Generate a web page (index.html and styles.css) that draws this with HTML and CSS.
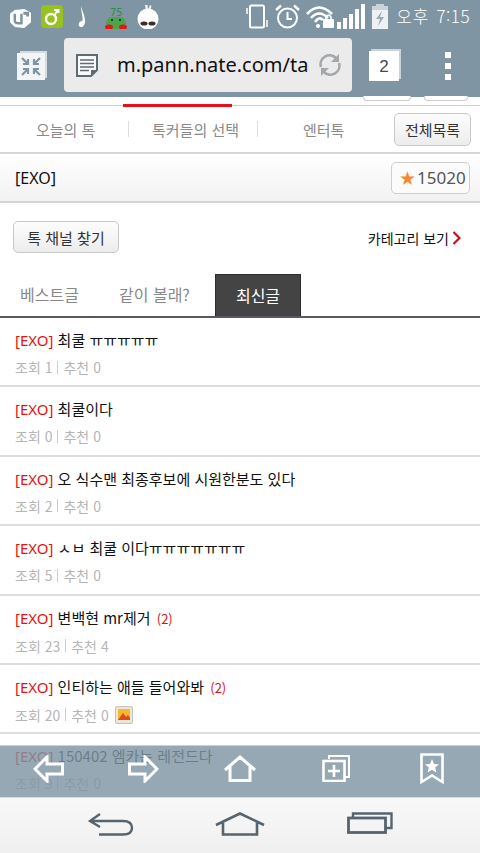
FILE: index.html
```html
<!DOCTYPE html>
<html lang="ko">
<head>
<meta charset="utf-8">
<title>EXO 톡</title>
<link rel="stylesheet" href="styles.css">
</head>
<body>
<div class="page">
  <header class="chrome">
    <div class="status">
      <div class="notifs">
        <svg class="n-u" viewBox="0 0 24 22"><path d="M6 2 L16 1 L23 5 L23 15 L16 21 L6 20 L1 15 L1 6 Z" fill="#fff"/><path d="M6 6 V13 Q6 16 10 16 H13 V6" fill="none" stroke="#7f95a3" stroke-width="2.6"/><path d="M15 4 H21 V9 H18 V7 H15 Z" fill="#7f95a3"/></svg>
        <svg class="n-g" viewBox="0 0 22 23"><rect width="22" height="23" rx="3.5" fill="#96c11f"/><circle cx="10" cy="14" r="5" fill="none" stroke="#fff" stroke-width="2.4"/><path d="M13.5 10 L17 5 M13 5 H17.5 V8" fill="none" stroke="#fff" stroke-width="2"/></svg>
        <svg class="n-m" viewBox="0 0 8 21"><path d="M3 0 C4 5 7 9 7 15 C7 19 5 21 3 21 C1 21 0 19 1 17 C2 15 4 15 4.500 15 C5 10 3 6 3 0 Z" fill="#fff"/></svg>
        <svg class="n-f" viewBox="0 0 22 22"><text x="5" y="9" class="frog-num">75</text><path d="M1 22 Q0 10 7 10 H15 Q22 10 21 22 Z" fill="#4ea34b"/><circle cx="7" cy="13" r="1" fill="#123"/><circle cx="15" cy="13" r="1" fill="#123"/><ellipse cx="4" cy="20" rx="4" ry="2.500" fill="#e6141a"/><ellipse cx="18" cy="20" rx="4" ry="2.500" fill="#e6141a"/></svg>
        <svg class="n-b" viewBox="0 0 22 24"><path d="M9 6 L8 0 L10.500 0 L11 5 L13 0 L14.500 1 L13 6 Z" fill="#f4f0ec"/><circle cx="11" cy="14" r="10.500" fill="#fff"/><ellipse cx="7" cy="18.500" rx="3.500" ry="2" fill="#3a2d28"/><ellipse cx="15" cy="18.500" rx="3.500" ry="2" fill="#3a2d28"/></svg>
      </div>
      <div class="sys">
        <svg class="s-phone" viewBox="0 0 24 25"><rect x="4" y="1.500" width="14" height="22" rx="1.500" fill="none" stroke="#fff" stroke-width="2"/><path d="M1 4 V10 M21 16 V23" stroke="#fff" stroke-width="1.500"/></svg>
        <svg class="s-alarm" viewBox="0 0 25 25"><circle cx="12.500" cy="14" r="9.500" fill="none" stroke="#fff" stroke-width="2"/><path d="M12.500 8 V15 H17" fill="none" stroke="#fff" stroke-width="2"/><path d="M1 6 L6 1.500 M24 6 L19 1.500" stroke="#fff" stroke-width="2.400"/></svg>
        <svg class="s-wifi" viewBox="0 0 29 24"><path d="M1 10 Q13 -3 26 10 M5 14 Q13 5 22 14 M9 18 Q13 12 17 16" fill="none" stroke="#fff" stroke-width="2.600"/><rect x="17" y="15" width="11" height="9" rx="1" fill="#fff"/><path d="M20 15 V13 Q22.500 9 25 13 V15" fill="none" stroke="#fff" stroke-width="1.600"/><circle cx="12" cy="22" r="2" fill="#fff"/></svg>
        <svg class="s-signal" viewBox="0 0 28 25"><path d="M0 18 H4 V25 H0 Z M6 14 H10 V25 H6 Z M12 10 H16 V25 H12 Z M18 5 H22 V25 H18 Z M24 0 H28 V25 H24 Z" fill="#fff"/></svg>
        <svg class="s-batt" viewBox="0 0 16 25"><path d="M4 0 H12 V2 H16 V25 H0 V2 H4 Z" fill="#c9d3d9"/><path d="M0 6 H16 V25 H0 Z" fill="#eef1f3"/><path d="M10 7 L4 15 H8 L6 22 L12 13 H8 Z" fill="#9aabb5"/></svg>
        <span class="clock"><span class="ampm">오후</span><span>7:15</span></span>
      </div>
    </div>
    <div class="urlrow">
      <svg class="i-shrink" viewBox="0 0 30 30"><path d="M3 1 H30 V28 H28 V3 H3 Z" fill="#d5dce1"/><rect x="0" y="3" width="28" height="27" fill="#f2f4f5"/><path d="M5 8 L11 14 M11 9 V14 H6 M23 8 L17 14 M17 9 V14 H22 M5 25 L11 19 M11 24 V19 H6 M23 25 L17 19 M17 24 V19 H22" fill="none" stroke="#7f95a3" stroke-width="2.200"/></svg>
      <div class="addr">
        <svg class="i-doc" viewBox="0 0 22 23"><path d="M1 1 H21 V16 L15 22 H1 Z" fill="#fafafa" stroke="#5d6b75" stroke-width="2"/><path d="M4 6 H18 M4 9.500 H18 M4 13 H18 M4 16.500 H13" stroke="#5d6b75" stroke-width="1.500"/><path d="M15 22 V16 H21 Z" fill="#5d6b75"/></svg>
        <span class="url">m.pann.nate.com/talk</span>
        <svg class="i-reload" viewBox="0 0 22 22"><path d="M2 13 A9 9 0 0 1 17 4 M20 9 A9 9 0 0 1 5 18" fill="none" stroke="#a3a8ac" stroke-width="2.600"/><path d="M20 0 V8 H12 Z M2 22 V14 H10 Z" fill="#a3a8ac"/></svg>
      </div>
      <div class="tabcount"><span>2</span></div>
      <div class="dots"><i></i><i></i><i></i></div>
    </div>
  </header>

  <div class="strip">
    <span class="ghost g1"></span><span class="ghost g2"></span>
    <span class="redbar"></span>
  </div>

  <nav class="mainnav">
    <a class="nav-a">오늘의 톡</a><i class="sep"></i>
    <a class="nav-b">톡커들의 선택</a><i class="sep"></i>
    <a class="nav-c">엔터톡</a>
    <button class="btn btn-all">전체목록</button>
  </nav>

  <section class="titlebar">
    <h1>[EXO]</h1>
    <div class="fav"><span class="star">★</span><span>15020</span></div>
  </section>

  <section class="tools">
    <button class="btn btn-find">톡 채널 찾기</button>
    <a class="cat">카테고리 보기<svg class="chev" viewBox="0 0 9 14"><path d="M1.500 1 L7.500 7 L1.500 13" fill="none" stroke="#c8101a" stroke-width="2.200"/></svg></a>
  </section>

  <div class="tabs">
    <a class="tab t1">베스트글</a>
    <a class="tab t2">같이 볼래?</a>
    <a class="tab t3 on">최신글</a>
  </div>

  <ul class="list">
    <li><p class="ttl"><b>[EXO]</b> 최쿨 ㅠㅠㅠㅠㅠ</p><p class="meta">조회 1<i></i>추천 0</p></li>
    <li><p class="ttl"><b>[EXO]</b> 최쿨이다</p><p class="meta">조회 0<i></i>추천 0</p></li>
    <li><p class="ttl"><b>[EXO]</b> 오 식수맨 최종후보에 시원한분도 있다</p><p class="meta">조회 2<i></i>추천 0</p></li>
    <li><p class="ttl"><b>[EXO]</b> ㅅㅂ 최쿨 이다ㅠㅠㅠㅠㅠㅠㅠ</p><p class="meta">조회 5<i></i>추천 0</p></li>
    <li><p class="ttl"><b>[EXO]</b> 변백현 mr제거 <em>(2)</em></p><p class="meta">조회 23<i></i>추천 4</p></li>
    <li><p class="ttl"><b>[EXO]</b> 인티하는 애들 들어와봐 <em>(2)</em></p><p class="meta">조회 20<i></i>추천 0<svg class="pic" viewBox="0 0 18 18"><rect x=".5" y=".5" width="17" height="17" rx="1.500" fill="#ece6d6" stroke="#c8c4b8"/><rect x="3" y="3" width="12" height="11" fill="#f7b733"/><path d="M3 14 L8 7 L11 11 L13 9 L15 12 V14 Z" fill="#e0491a"/></svg></p></li>
    <li><p class="ttl"><b>[EXO]</b> 150402 엠카는 레전드다</p><p class="meta">조회 9<i></i>추천 0</p></li>
  </ul>

  <div class="bottom">
    <div class="toolbar">
      <svg class="b-back" viewBox="0 0 31 28"><path d="M29.500 9 H14 V2 L2 14 L14 26 V19 H29.500 Z" fill="none" stroke="#fff" stroke-width="3"/></svg>
      <svg class="b-fwd" viewBox="0 0 31 28"><path d="M1.500 9 H17 V2 L29 14 L17 26 V19 H1.500 Z" fill="none" stroke="#fff" stroke-width="3"/></svg>
      <svg class="b-home" viewBox="0 0 32 27"><path d="M1 15 L16 2 L31 15 M6 11 V25.500 H26 V11" fill="none" stroke="#fff" stroke-width="3"/></svg>
      <svg class="b-add" viewBox="0 0 28 27"><path d="M7 4 V1 H27 V22 H23" fill="none" stroke="#fff" stroke-width="2"/><rect x="1.500" y="6" width="21" height="20" fill="none" stroke="#fff" stroke-width="2.600"/><path d="M6 16 H18 M12 10 V22" stroke="#fff" stroke-width="2.600"/></svg>
      <svg class="b-mark" viewBox="0 0 24 32"><path d="M1.500 1.500 H22.500 V29 L12 22.500 L1.500 29 Z" fill="none" stroke="#fff" stroke-width="2.600"/><path d="M12 6 L14 11 L19 11.300 L15.200 14.500 L16.400 19.500 L12 16.700 L7.600 19.500 L8.800 14.500 L5 11.300 L10 11 Z" fill="#fff"/></svg>
    </div>
    <div class="sysnav">
      <svg class="k-back" viewBox="0 0 46 24"><path d="M12 2 L2 9 L12 15 M2 9 H35 Q44 9 44 16 Q44 22.500 35 22.500 H11" fill="none" stroke="#56646f" stroke-width="2.400"/></svg>
      <svg class="k-home" viewBox="0 0 50 24"><path d="M1 13 L25 1.500 L49 13 M8 11 V22.500 H42 V11" fill="none" stroke="#56646f" stroke-width="2.600"/></svg>
      <svg class="k-rec" viewBox="0 0 46 22"><path d="M6 5 V1.500 H44.500 V16 H39" fill="none" stroke="#56646f" stroke-width="2.400"/><rect x="1.500" y="6" width="37" height="14.500" fill="none" stroke="#56646f" stroke-width="2.800"/></svg>
    </div>
  </div>
</div>
</body>
</html>
```
FILE: styles.css
```css
* { box-sizing: border-box; }
html, body { margin: 0; padding: 0; }
body { background: #fff; font-family: "Noto Sans CJK KR", "Noto Sans", sans-serif; }
svg { display: block; flex: none; }
p, h1, ul { margin: 0; padding: 0; }
li { list-style: none; }
button { font-family: inherit; }

.page { position: relative; width: 480px; height: 853px; overflow: hidden; }

/* browser chrome */
.chrome { height: 97px; background: #7f95a3; }
.status { height: 38px; display: flex; justify-content: space-between; align-items: flex-start; }
.notifs { display: flex; align-items: flex-start; padding: 5px 0 0 9px; }
.n-u { width: 23px; height: 21px; margin-top: 3px; }
.n-g { width: 22px; height: 23px; margin-left: 9px; }
.n-m { width: 8px; height: 21px; margin: 1px 0 0 15px; }
.n-f { width: 22px; height: 22px; margin: 2px 0 0 19px; }
.frog-num { font: 10px "DejaVu Sans", sans-serif; fill: #2f8f3c; }
.n-b { width: 22px; height: 24px; margin-left: 10px; }
.sys { display: flex; align-items: flex-start; padding: 4px 10px 0 0; color: #fff; }
.s-phone { width: 24px; height: 25px; }
.s-alarm { width: 25px; height: 25px; margin-left: 5px; }
.s-wifi { width: 29px; height: 24px; margin-left: 6px; }
.s-signal { width: 28px; height: 25px; margin-left: 2px; }
.s-batt { width: 16px; height: 25px; margin-left: 7px; }
.clock { display: flex; gap: 7px; margin-left: 8px; line-height: 24px; font-size: 17px; font-family: "Noto Sans CJK KR", sans-serif; letter-spacing: .5px; font-weight: 300; }
.ampm { letter-spacing: 1px; }

.urlrow { height: 59px; display: flex; align-items: flex-start; padding-left: 17px; }
.i-shrink { width: 30px; height: 30px; margin-top: 12px; }
.addr { width: 288px; height: 54px; margin-left: 17px; background: #ebebeb; border-radius: 4px; display: flex; align-items: center; padding-left: 12px; }
.i-doc { width: 22px; height: 23px; }
.url { width: 192px; margin-left: 19px; overflow: hidden; white-space: nowrap; font: 20px/28px "Noto Sans", sans-serif; color: #111; }
.i-reload { width: 22px; height: 22px; margin-left: 10px; }
.tabcount { width: 30px; height: 30px; margin: 13px 0 0 17px; background: #fff; border-top: 2px solid #fff; box-shadow: 2px -2px 0 #c9d3d9; display: flex; align-items: center; justify-content: center; font: 17px "Liberation Sans", sans-serif; color: #3d4a53; }
.dots { display: flex; flex-direction: column; gap: 5px; margin: 14px 0 0 46px; }
.dots i { width: 6px; height: 6px; background: #fff; }

/* strip under chrome */
.strip { position: relative; height: 9px; background: #fff; border-bottom: 1px solid #d0d0d0; }
.ghost { position: absolute; top: -1px; height: 5px; background: #fff; border: 1px solid #ccc; border-top: 0; border-radius: 0 0 4px 4px; }
.g1 { left: 363px; width: 48px; }
.g2 { left: 424px; width: 44px; }
.redbar { position: absolute; left: 123px; top: 7px; width: 109px; height: 3px; background: #e60f1e; }

/* main nav */
.mainnav { height: 48px; display: flex; align-items: center; border-bottom: 2px solid #d6d6d6; font-size: 15px; color: #8a8a8a; position: relative; }
.mainnav a { white-space: nowrap; }
.nav-a { margin-left: 36px; width: 92px; }
.sep { width: 1px; height: 16px; background: #ddd; }
.nav-b { margin-left: 23px; width: 105px; }
.nav-c { margin-left: 45px; width: 46px; }
.btn { background: linear-gradient(#fdfdfd, #ececec); border: 1px solid #c8c8c8; border-radius: 5px; color: #333; padding: 0; font-size: 15px; white-space: nowrap; }
.btn-all { width: 77px; height: 33px; margin-left: 45px; }

/* title */
.titlebar { height: 49px; display: flex; align-items: center; justify-content: space-between; padding: 0 10px 0 15px; background: linear-gradient(#fff, #f2f2f2); border-bottom: 2px solid #d4d4d4; }
.titlebar h1 { font-size: 16px; font-weight: 400; color: #111; line-height: 24px; font-family: "Noto Sans", sans-serif; }
.fav { width: 79px; height: 32px; background: #fbfbfb; border: 1px solid #cfcfcf; border-radius: 5px; display: flex; align-items: center; padding-left: 7px; font: 17px "Noto Sans", sans-serif; color: #555; }
.star { color: #f58a2e; font: 19px "DejaVu Sans", sans-serif; margin-right: 1px; }

/* tools */
.tools { height: 71px; display: flex; justify-content: space-between; align-items: flex-start; padding: 18px 19px 0 13px; }
.btn-find { width: 106px; height: 32px; }
.cat { display: flex; align-items: center; gap: 3px; margin-top: 7px; font-size: 14px; color: #111; line-height: 20px; }
.chev { width: 9px; height: 14px; }

/* tabs */
.tabs { height: 44px; display: flex; align-items: flex-end; border-bottom: 2px solid #555b60; font-size: 16px; color: #888; }
.tab { height: 42px; line-height: 40px; white-space: nowrap; }
.t1 { margin-left: 20px; width: 99px; }
.t2 { width: 96px; }
.t3 { width: 86px; text-align: center; background: #444; color: #fff; border: 1px solid #2d2d2d; border-bottom: 0; }

/* list */
.list li { height: 69.4px; border-bottom: 2px solid #ddd; padding: 9px 15px 0; }
.ttl { font-size: 15px; line-height: 26px; color: #111; white-space: nowrap; }
.ttl b { font-weight: 400; color: #e3140f; font-family: "Noto Sans", sans-serif; }
.ttl em { font-style: normal; color: #d8131a; font-size: 13px; margin-left: 2px; }
.meta { display: flex; align-items: center; margin-top: 3px; font-size: 14px; line-height: 22px; color: #b5b5b5; white-space: nowrap; }
.meta i { width: 1px; height: 13px; background: #ccc; margin: 0 5px; }
.pic { width: 18px; height: 18px; margin-left: 6px; }

/* bottom overlay */
.bottom { position: absolute; left: 0; right: 0; bottom: 0; }
.toolbar { height: 52px; background: rgba(127, 149, 163, .82); border-top: 1px solid #c8d4db; display: flex; align-items: flex-start; padding: 9px 0 0 33px; }
.b-back { width: 31px; height: 28px; }
.b-fwd { width: 31px; height: 28px; margin-left: 64px; }
.b-home { width: 32px; height: 27px; margin-left: 65px; }
.b-add { width: 28px; height: 27px; margin-left: 66px; }
.b-mark { width: 24px; height: 32px; margin: -2px 0 0 70px; }
.sysnav { height: 56px; background: linear-gradient(#f8f8f8, #f0f0f0); border-top: 1px solid #d5dbe0; display: flex; align-items: flex-start; padding: 14px 0 0 88px; }
.k-back { width: 46px; height: 24px; }
.k-home { width: 50px; height: 24px; margin-left: 81px; }
.k-rec { width: 46px; height: 22px; margin-left: 82px; }
```
